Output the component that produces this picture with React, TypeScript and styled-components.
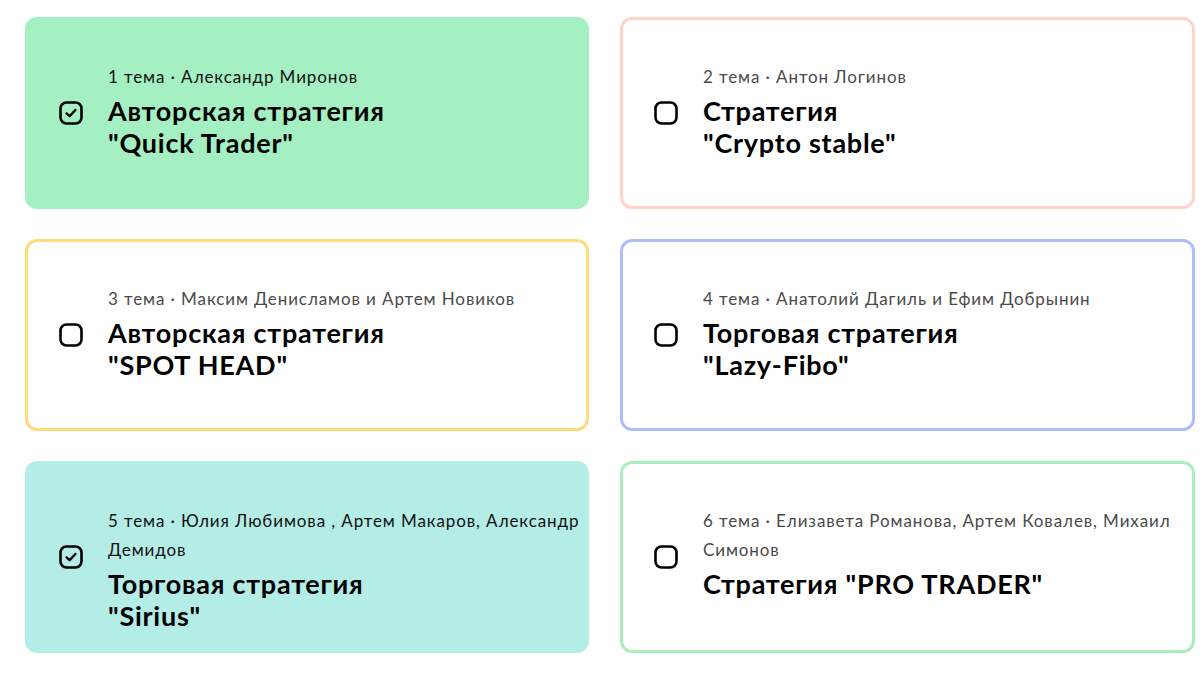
import React from "react";
import styled, { createGlobalStyle } from "styled-components";

interface Topic {
  num: number;
  authors: string;
  title: string[];
  checked: boolean;
  fill?: string;
  border?: string;
}

const topics: Topic[] = [
  {
    num: 1,
    authors: "Александр Миронов",
    title: ["Авторская стратегия", "\"Quick Trader\""],
    checked: true,
    fill: "#a4f0c2",
  },
  {
    num: 2,
    authors: "Антон Логинов",
    title: ["Стратегия", "\"Crypto stable\""],
    checked: false,
    border: "#ffd4c7",
  },
  {
    num: 3,
    authors: "Максим Денисламов и Артем Новиков",
    title: ["Авторская стратегия", "\"SPOT HEAD\""],
    checked: false,
    border: "#ffdb7c",
  },
  {
    num: 4,
    authors: "Анатолий Дагиль и Ефим Добрынин",
    title: ["Торговая стратегия", "\"Lazy-Fibo\""],
    checked: false,
    border: "#adbefb",
  },
  {
    num: 5,
    authors: "Юлия Любимова , Артем Макаров, Александр Демидов",
    title: ["Торговая стратегия", "\"Sirius\""],
    checked: true,
    fill: "#b4ece6",
  },
  {
    num: 6,
    authors: "Елизавета Романова, Артем Ковалев, Михаил Симонов",
    title: ["Стратегия \"PRO TRADER\""],
    checked: false,
    border: "#a9eebf",
  },
];

const GlobalStyle = createGlobalStyle`
  html, body {
    margin: 0;
    padding: 0;
    background: #ffffff;
  }
  body {
    font-family: Lato, "Noto Sans", "Liberation Sans", sans-serif;
    color: #000;
  }
`;

const Grid = styled.div`
  display: grid;
  grid-template-columns: 564px 575px;
  column-gap: 31px;
  row-gap: 30px;
  padding: 17px 0 0 25px;
`;

const Card = styled.label<{ $fill?: string; $border?: string }>`
  box-sizing: border-box;
  height: 192px;
  display: flex;
  align-items: center;
  gap: 25px;
  padding: 0 3px 0 31px;
  border-radius: 12px;
  border: 3px solid ${(p) => p.$border || "transparent"};
  background: ${(p) => p.$fill || "#ffffff"};
  cursor: pointer;
`;

const Box = styled.svg`
  flex: none;
  width: 24px;
  height: 24px;
`;

const Body = styled.div`
  flex: 1;
  align-self: flex-start;
  padding-top: 42px;
`;

const Meta = styled.div<{ $muted: boolean }>`
  font-size: 17px;
  line-height: 29px;
  letter-spacing: 0.9px;
  color: ${(p) => (p.$muted ? "#4a4a4a" : "#111111")};
`;

const Title = styled.div`
  margin-top: 4px;
  font-size: 27px;
  line-height: 32px;
  letter-spacing: 0.75px;
  font-weight: 700;
  color: #000;
`;

const CheckIcon = ({ checked }: { checked: boolean }) => (
  <Box viewBox="0 0 24 24" fill="none">
    <rect
      x="1.5"
      y="1.5"
      width="21"
      height="21"
      rx="6"
      stroke="#000"
      strokeWidth="2.6"
    />
    {checked && (
      <path
        d="M7.6 12.4 L10.6 15.2 L16.4 9"
        stroke="#000"
        strokeWidth="2.4"
        strokeLinecap="round"
        strokeLinejoin="round"
      />
    )}
  </Box>
);

export default function App() {
  return (
    <>
      <GlobalStyle />
      <Grid>
        {topics.map((t) => (
          <Card key={t.num} $fill={t.fill} $border={t.border}>
            <CheckIcon checked={t.checked} />
            <Body>
              <Meta $muted={!t.fill}>{`${t.num} тема · ${t.authors}`}</Meta>
              <Title>
                {t.title.map((line, i) => (
                  <div key={i}>{line}</div>
                ))}
              </Title>
            </Body>
          </Card>
        ))}
      </Grid>
    </>
  );
}
